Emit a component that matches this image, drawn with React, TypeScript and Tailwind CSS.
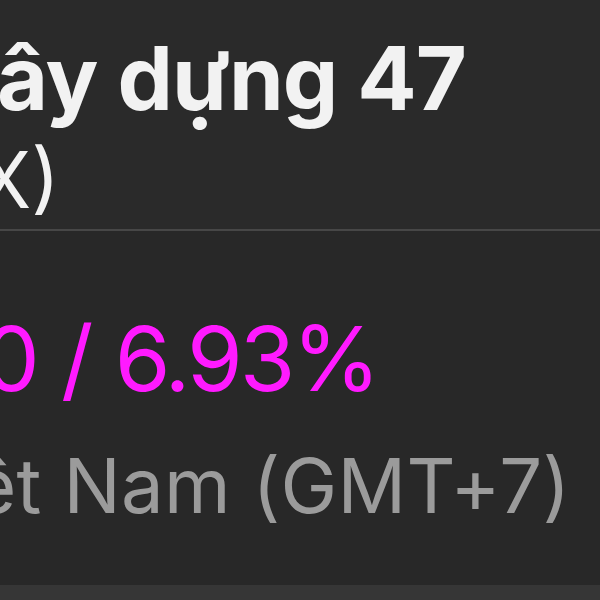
export default function App() {
  return (
    <div className="w-[600px] h-[600px] overflow-hidden bg-[#2a2a2a] flex flex-col" style={{ fontFamily: 'Inter, "Noto Sans", sans-serif' }}>
      <div className="h-[229px] shrink-0 pt-[34px] overflow-hidden whitespace-nowrap">
        <div className="text-[88px] leading-none font-bold text-[#f2f2f2] ml-[-3px] tracking-[-1px]">ây dựng 47</div>
        <div className="text-[78px] leading-none font-normal text-[#f2f2f2] ml-[-22px] mt-[19px]">X)</div>
      </div>
      <div className="h-[2px] shrink-0 bg-[#474747]" />
      <div className="flex-1 bg-[#282828] pt-[83px] overflow-hidden whitespace-nowrap">
        <div className="text-[90px] leading-none font-normal text-[#ff1aff] ml-[-17px] [word-spacing:2px] tracking-[-3px]">0 / 6.93%</div>
        <div className="text-[76px] leading-none font-normal text-[#9b9b9b] ml-[-28px] mt-[43px] tracking-[0.3px]">ệt Nam (GMT+7)</div>
      </div>
      <div className="h-[15px] shrink-0 bg-[#363636]" />
    </div>
  );
}
